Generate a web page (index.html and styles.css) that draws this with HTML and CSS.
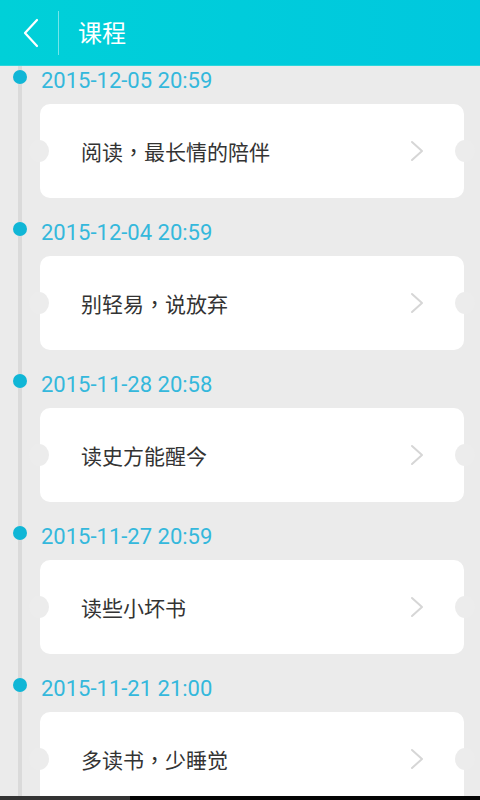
FILE: index.html
```html
<!DOCTYPE html>
<html lang="zh-CN">
<head>
<meta charset="utf-8">
<title>课程</title>
<link rel="stylesheet" href="styles.css">
</head>
<body>
<div class="app">
  <header class="topbar">
    <button class="back" aria-label="返回">
      <svg width="18" height="30" viewBox="0 0 18 30"><path d="M15 2 L3 15 L15 28" fill="none" stroke="#fff" stroke-width="2.2" stroke-linecap="round" stroke-linejoin="round"/></svg>
    </button>
    <span class="divider"></span>
    <h1 class="title">课程</h1>
  </header>
  <main class="timeline">
    <section class="item">
      <div class="date">2015-12-05 20:59</div>
      <div class="card"><span class="name">阅读<span class="p" lang="zh-TW">，</span>最长情的陪伴</span><svg class="chev" width="14" height="22" viewBox="0 0 14 22"><path d="M2 2 L12 11 L2 20" fill="none" stroke="#d6d6d6" stroke-width="2" stroke-linecap="round" stroke-linejoin="round"/></svg></div>
    </section>
    <section class="item">
      <div class="date">2015-12-04 20:59</div>
      <div class="card"><span class="name">别轻易<span class="p" lang="zh-TW">，</span>说放弃</span><svg class="chev" width="14" height="22" viewBox="0 0 14 22"><path d="M2 2 L12 11 L2 20" fill="none" stroke="#d6d6d6" stroke-width="2" stroke-linecap="round" stroke-linejoin="round"/></svg></div>
    </section>
    <section class="item">
      <div class="date">2015-11-28 20:58</div>
      <div class="card"><span class="name">读史方能醒今</span><svg class="chev" width="14" height="22" viewBox="0 0 14 22"><path d="M2 2 L12 11 L2 20" fill="none" stroke="#d6d6d6" stroke-width="2" stroke-linecap="round" stroke-linejoin="round"/></svg></div>
    </section>
    <section class="item">
      <div class="date">2015-11-27 20:59</div>
      <div class="card"><span class="name">读些小坏书</span><svg class="chev" width="14" height="22" viewBox="0 0 14 22"><path d="M2 2 L12 11 L2 20" fill="none" stroke="#d6d6d6" stroke-width="2" stroke-linecap="round" stroke-linejoin="round"/></svg></div>
    </section>
    <section class="item">
      <div class="date">2015-11-21 21:00</div>
      <div class="card"><span class="name">多读书<span class="p" lang="zh-TW">，</span>少睡觉</span><svg class="chev" width="14" height="22" viewBox="0 0 14 22"><path d="M2 2 L12 11 L2 20" fill="none" stroke="#d6d6d6" stroke-width="2" stroke-linecap="round" stroke-linejoin="round"/></svg></div>
    </section>
  </main>
  <div class="navbar"><span class="nav-left"></span></div>
</div>
</body>
</html>
```
FILE: styles.css
```css
* { box-sizing: border-box; }
html, body { margin: 0; padding: 0; }
body {
  background: #ebebeb;
  font-family: Roboto, "Noto Sans CJK SC", "Noto Sans", sans-serif;
}
.app {
  width: 480px;
  height: 800px;
  display: flex;
  flex-direction: column;
  overflow: hidden;
}
.topbar {
  height: 66px;
  flex: none;
  display: flex;
  align-items: center;
  background: linear-gradient(90deg, #00d0d8 0%, #00c8de 100%);
  border-bottom: 1px solid #2cd6dc;
}
.back {
  width: 58px;
  height: 66px;
  padding: 0 0 0 3px;
  border: 0;
  background: transparent;
  display: flex;
  align-items: center;
  justify-content: center;
}
.divider {
  width: 1px;
  height: 44px;
  background: rgba(255, 255, 255, 0.45);
}
.title {
  margin: 0 0 2px 19px;
  color: #fff;
  font-family: "Noto Sans CJK SC", sans-serif;
  font-size: 24px;
  font-weight: 400;
  line-height: 1;
}
.timeline {
  flex: 1;
  position: relative;
  overflow: hidden;
}
.timeline::before {
  content: "";
  position: absolute;
  left: 18px;
  top: 0;
  bottom: 0;
  width: 4px;
  background: #dadada;
}
.item {
  position: relative;
  margin-bottom: 20px;
}
.date {
  position: relative;
  height: 38px;
  padding-left: 41px;
  line-height: 29px;
  font-size: 22px;
  color: #34b8dc;
}
.date::before {
  content: "";
  position: absolute;
  left: 13px;
  top: 4px;
  width: 14px;
  height: 14px;
  border-radius: 50%;
  background: #10b6d6;
}
.card {
  position: relative;
  margin-left: 40px;
  width: 424px;
  height: 94px;
  background: #fff;
  border-radius: 10px;
  display: flex;
  align-items: center;
  justify-content: space-between;
  padding: 0 40px 0 41px;
}
.card::before,
.card::after {
  content: "";
  position: absolute;
  top: 50%;
  width: 20px;
  height: 22px;
  margin-top: -11px;
  border-radius: 50%;
  background: #ececec;
}
.card::before { left: -11px; }
.card::after { right: -11px; }
.name {
  font-family: "Noto Sans CJK SC", sans-serif;
  font-size: 21px;
  color: #333;
  line-height: 1;
}
.name .p {
  font-family: "Noto Sans CJK TC", sans-serif;
}
.chev { display: block; }
.navbar {
  height: 4px;
  flex: none;
  background: #050505;
  display: flex;
}
.nav-left {
  width: 130px;
  background: #333;
}
```
